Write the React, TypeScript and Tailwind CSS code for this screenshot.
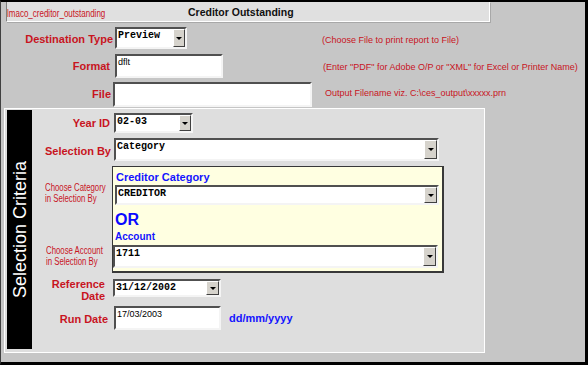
import React from "react";

const RED = "text-[#c8141e]";

function Select({
  className,
  text,
  btnClass = "w-[12px]",
}: {
  className: string;
  text: string;
  btnClass?: string;
}) {
  return (
    <div
      className={`flex bg-white border-2 border-t-[#505050] border-l-[#505050] border-b-[#f4f4f4] border-r-[#f4f4f4] ${className}`}
    >
      <div className="flex-1 pl-[1px] pt-[1px] font-['Liberation_Mono',monospace] text-[10px] font-bold leading-[12px] text-black whitespace-pre">
        {text}
      </div>
      <div
        className={`${btnClass} bg-[#d6d3cc] border border-t-white border-l-white border-b-[#404040] border-r-[#404040] flex items-center justify-center`}
      >
        <div className="w-0 h-0 border-l-[3px] border-r-[3px] border-t-[3px] border-l-transparent border-r-transparent border-t-black" />
      </div>
    </div>
  );
}

function TextBox({ className, text = "" }: { className: string; text?: string }) {
  return (
    <div
      className={`bg-white border-2 border-t-[#505050] border-l-[#505050] border-b-[#f4f4f4] border-r-[#f4f4f4] pl-[1px] text-[9px] leading-[12px] text-black ${className}`}
    >
      {text}
    </div>
  );
}

export default function App() {
  return (
    <div className="w-[588px] h-[365px] bg-[#c6c6c6] border-t-2 border-r-[3px] border-b-[3px] border-l border-t-black border-r-black border-b-black border-l-[#404040] font-['Liberation_Sans',Arial,sans-serif] flex flex-col overflow-hidden">
      {/* Title bar */}
      <div className="ml-[5px] w-[484px] h-[20px] shrink-0 bg-[#e0e0e0] border-l border-l-[#808080] border-r border-b border-r-white border-b-white shadow-[1px_1px_0_#a8a8a8] flex items-center">
        <div className="w-[181px] shrink-0">
          <span className={`inline-block origin-left scale-x-[0.8] text-[10px] leading-[12px] ${RED}`}>
            lmaco_creditor_outstanding
          </span>
        </div>
        <div className="text-[10.5px] font-bold text-[#111] leading-[12px]">Creditor Outstanding</div>
      </div>

      {/* Row 1 */}
      <div className="mt-[5px] h-[22px] flex shrink-0">
        <div className={`w-[112px] flex items-center justify-end pt-[3px] text-[11px] font-bold ${RED}`}>
          Destination Type
        </div>
        <Select className="ml-[2px] w-[72px] h-[22px]" text="Preview" />
        <div className={`ml-[135px] pt-[8px] text-[9px] leading-[11px] ${RED}`}>
          (Choose File to print report to File)
        </div>
      </div>

      {/* Row 2 */}
      <div className="mt-[5px] h-[24px] flex shrink-0">
        <div className={`w-[112px] flex items-center justify-end pr-[3px] text-[11px] font-bold ${RED}`}>
          Format
        </div>
        <TextBox className="ml-[2px] w-[108px] h-[24px]" text="dflt" />
        <div className={`ml-[100px] pt-[8px] text-[9px] leading-[11px] ${RED}`}>
          (Enter "PDF" for Adobe O/P or "XML" for Excel or Printer Name)
        </div>
      </div>

      {/* Row 3 */}
      <div className="mt-[4px] h-[25px] flex shrink-0">
        <div className={`w-[112px] flex items-center justify-end pr-[2px] text-[11px] font-bold ${RED}`}>
          File
        </div>
        <TextBox className="w-[199px] h-[25px]" />
        <div className={`ml-[13px] pt-[6px] text-[9px] leading-[11px] ${RED}`}>
          Output Filename viz. C:\ces_output\xxxxx.prn
        </div>
      </div>

      {/* Selection Criteria panel */}
      <div className="mt-[1px] ml-[3px] w-[481px] h-[245px] shrink-0 border border-white bg-[#dedede] flex">
        <div className="ml-[2px] mt-[1px] w-[25px] h-[239px] bg-black flex items-center justify-center">
          <span className="[writing-mode:vertical-rl] rotate-180 text-white text-[18px] leading-none whitespace-nowrap">
            Selection Criteria
          </span>
        </div>

        <div className="flex flex-col">
          {/* Year ID */}
          <div className="mt-[4px] h-[20px] flex">
            <div className={`w-[80px] flex items-center justify-end pr-[2px] pt-[1px] text-[11px] font-bold ${RED}`}>
              Year ID
            </div>
            <Select className="ml-[2px] w-[79px] h-[20px]" text="02-03" />
          </div>

          {/* Selection By */}
          <div className="mt-[5px] h-[23px] flex">
            <div className={`w-[80px] flex items-center justify-end pr-[1px] pt-[3px] text-[11px] font-bold ${RED}`}>
              Selection By
            </div>
            <Select className="ml-[2px] w-[325px] h-[23px]" text="Category" btnClass="w-[13px]" />
          </div>

          {/* Category / Account block */}
          <div className="mt-[5px] flex">
            <div className="w-[80px] flex flex-col pl-[13px]">
              <div className={`mt-[16px] text-[10px] leading-[11px] ${RED}`}>
                <span className="block origin-left scale-x-[0.78] whitespace-nowrap">Choose Category</span>
                <span className="block origin-left scale-x-[0.78] whitespace-nowrap">in Selection By</span>
              </div>
              <div className={`mt-[41px] ml-[1px] text-[10px] leading-[11px] ${RED}`}>
                <span className="block origin-left scale-x-[0.78] whitespace-nowrap">Choose Account</span>
                <span className="block origin-left scale-x-[0.78] whitespace-nowrap">in Selection By</span>
              </div>
            </div>
            <div className="w-[332px] h-[107px] bg-[#ffffe1] border border-[#383838] border-r-2 border-b-2 flex flex-col">
              <div className="mt-[3px] pl-[3px] text-[11px] leading-[14px] font-bold text-[#1414ff]">
                Creditor Category
              </div>
              <Select className="mt-[1px] ml-[2px] w-[324px] h-[20px]" text="CREDITOR" btnClass="w-[13px]" />
              <div className="mt-[6px] pl-[2px] text-[16px] leading-[18px] font-bold text-[#0a0aff]">OR</div>
              <div className="mt-[2px] pl-[2px] text-[10px] leading-[12px] font-bold text-[#1414ff]">Account</div>
              <Select className="mt-[2px] w-[325px] h-[23px]" text="1711" btnClass="w-[13px]" />
            </div>
          </div>

          {/* Reference Date */}
          <div className="mt-[5px] h-[24px] flex">
            <div className={`w-[80px] flex flex-col items-end pr-[7px] text-[11px] leading-[12px] font-bold ${RED}`}>
              <span>Reference</span>
              <span>Date</span>
            </div>
            <Select className="mt-[1px] ml-[1px] w-[108px] h-[18px]" text="31/12/2002" btnClass="w-[13px]" />
          </div>

          {/* Run Date */}
          <div className="mt-[4px] h-[24px] flex items-center">
            <div className={`w-[80px] flex items-center justify-end pr-[4px] pt-[3px] text-[11px] font-bold ${RED}`}>
              Run Date
            </div>
            <TextBox className="ml-[2px] w-[107px] h-[24px]" text="17/03/2003" />
            <div className="ml-[8px] text-[11px] font-bold text-[#1414ff]">dd/mm/yyyy</div>
          </div>
        </div>
      </div>
    </div>
  );
}
